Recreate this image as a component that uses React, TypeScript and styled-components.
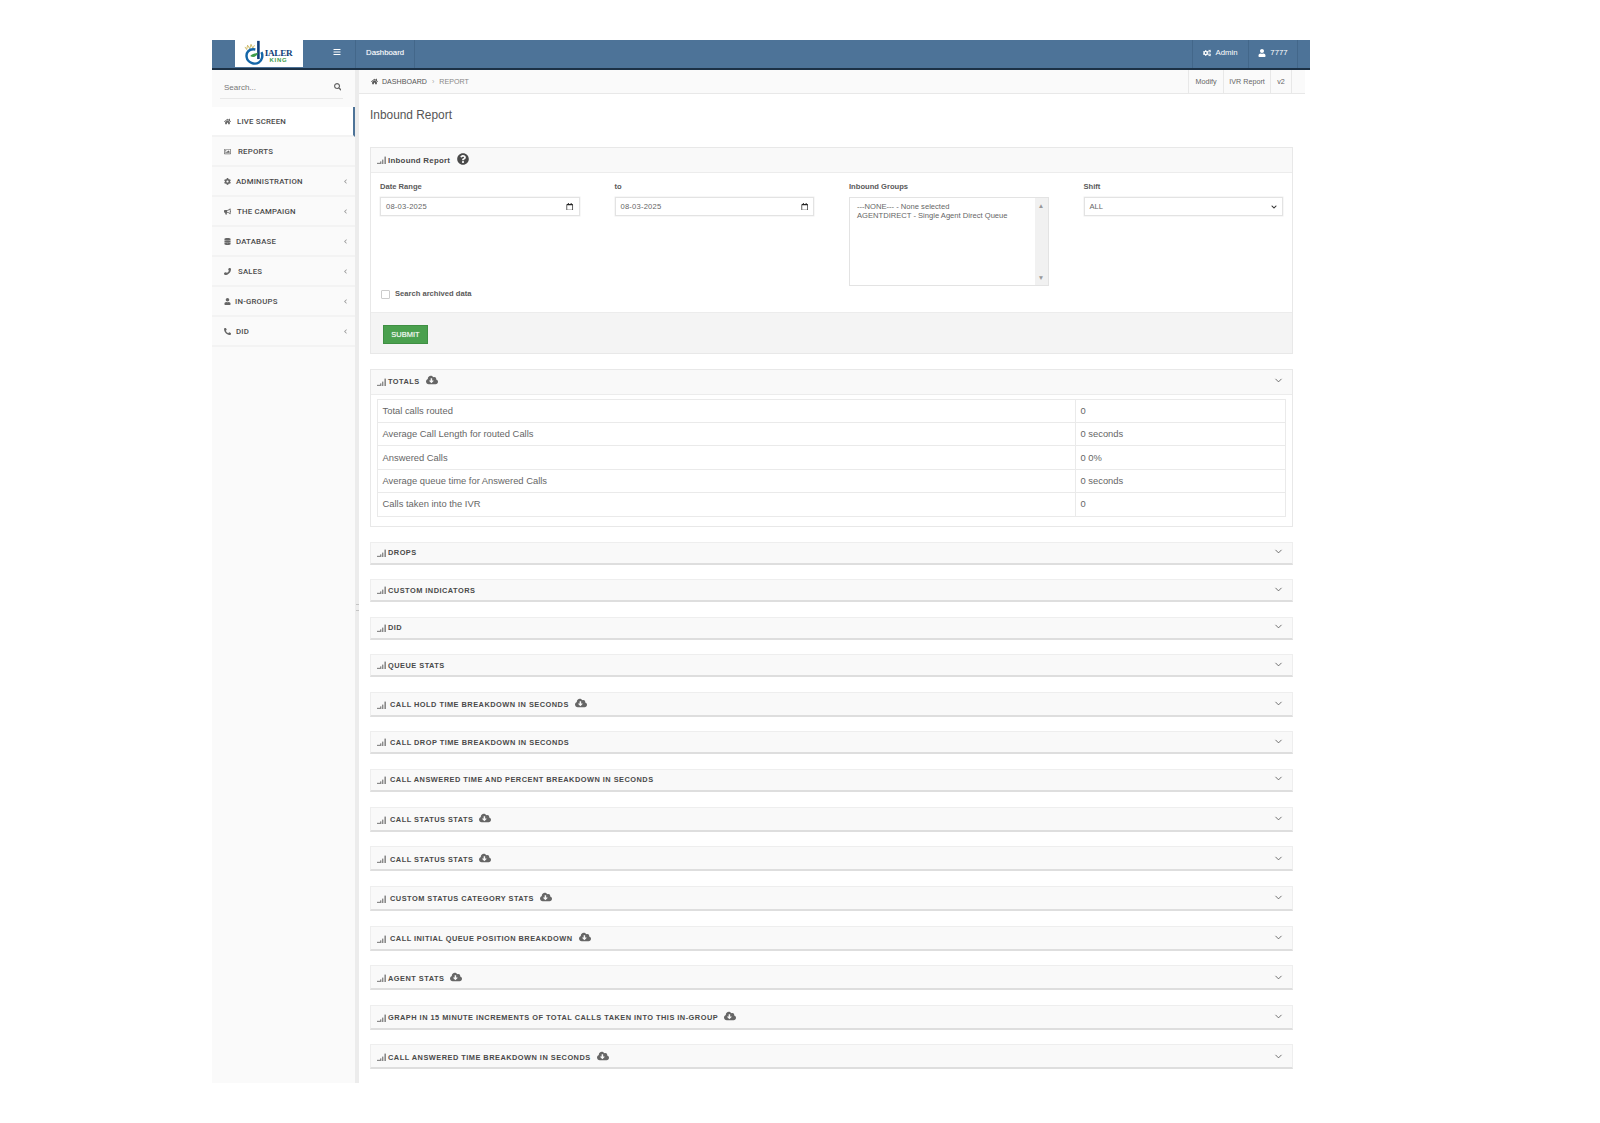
import styled, { createGlobalStyle } from "styled-components";
import type { ReactNode } from "react";
import { ChevronDown } from "lucide-react";
import {
  FaBars,
  FaBullhorn,
  FaChevronDown,
  FaChevronLeft,
  FaCloudDownloadAlt,
  FaCog,
  FaCogs,
  FaDatabase,
  FaHome,
  FaPhoneAlt,
  FaQuestionCircle,
  FaRegCalendar,
  FaRegImage,
  FaSearch,
  FaUser,
} from "react-icons/fa";
import { FaPhoneFlip } from "react-icons/fa6";

const GlobalStyle = createGlobalStyle`
  html, body {
    margin: 0;
    padding: 0;
    background: #fff;
  }
  * {
    box-sizing: border-box;
  }
`;

const navItems: { label: string; icon: ReactNode; gap: number; arrow?: boolean; active?: boolean }[] = [
  { label: "LIVE SCREEN", icon: <FaHome />, gap: 6, active: true },
  { label: "REPORTS", icon: <FaRegImage />, gap: 7 },
  { label: "ADMINISTRATION", icon: <FaCog />, gap: 5, arrow: true },
  { label: "THE CAMPAIGN", icon: <FaBullhorn />, gap: 6, arrow: true },
  { label: "DATABASE", icon: <FaDatabase />, gap: 5, arrow: true },
  { label: "SALES", icon: <FaPhoneFlip />, gap: 7, arrow: true },
  { label: "IN-GROUPS", icon: <FaUser />, gap: 4, arrow: true },
  { label: "DID", icon: <FaPhoneAlt />, gap: 5, arrow: true },
];

const totals = [
  ["Total calls routed", "0"],
  ["Average Call Length for routed Calls", "0 seconds"],
  ["Answered Calls", "0 0%"],
  ["Average queue time for Answered Calls", "0 seconds"],
  ["Calls taken into the IVR", "0"],
];

const sections: { title: string; cloud?: boolean; indent?: boolean; height: number }[] = [
  { title: "DROPS", height: 23 },
  { title: "CUSTOM INDICATORS", height: 23 },
  { title: "DID", height: 23 },
  { title: "QUEUE STATS", height: 23 },
  { title: "CALL HOLD TIME BREAKDOWN IN SECONDS", cloud: true, indent: true, height: 24.5 },
  { title: "CALL DROP TIME BREAKDOWN IN SECONDS", indent: true, height: 23 },
  { title: "CALL ANSWERED TIME AND PERCENT BREAKDOWN IN SECONDS", indent: true, height: 23.5 },
  { title: "CALL STATUS STATS", cloud: true, indent: true, height: 25 },
  { title: "CALL STATUS STATS", cloud: true, indent: true, height: 25 },
  { title: "CUSTOM STATUS CATEGORY STATS", cloud: true, indent: true, height: 25 },
  { title: "CALL INITIAL QUEUE POSITION BREAKDOWN", cloud: true, indent: true, height: 25 },
  { title: "AGENT STATS", cloud: true, height: 25 },
  { title: "GRAPH IN 15 MINUTE INCREMENTS OF TOTAL CALLS TAKEN INTO THIS IN-GROUP", cloud: true, height: 25 },
  { title: "CALL ANSWERED TIME BREAKDOWN IN SECONDS", cloud: true, height: 25 },
];

const SignalIcon = () => (
  <SignalSvg viewBox="0 0 9 8" aria-hidden="true">
    <rect x="0" y="6.8" width="3" height="1.2" />
    <rect x="3" y="5.4" width="1.4" height="2.6" />
    <rect x="5" y="3.6" width="1.4" height="4.4" />
    <rect x="7.4" y="0.6" width="1.6" height="7.4" />
  </SignalSvg>
);

const App = () => {
  return (
    <Frame>
      <GlobalStyle />
      <TopBar>
        <LogoBox>
          <LogoMark viewBox="0 0 24 30" aria-hidden="true">
            <path d="M1 8 L3 11 L4 6 L6.5 10 L8 5 L10 9.5 L12 6" fill="none" stroke="#c9b35a" strokeWidth="1" />
            <path d="M16.5 1 L16.5 22" stroke="#123f7a" strokeWidth="3" fill="none" />
            <path d="M13 11 C5 9.5 2 15 3 20 C4 26 12 29 17 26 C21 23.5 22 18 20 14" stroke="#1466a8" strokeWidth="2.8" fill="none" />
            <path d="M7 18.5 C10 15 13 16 16 14.5 C15 19 11 21 7 18.5 Z" fill="#3f9e4a" />
          </LogoMark>
          <LogoWords>
            <LogoName>IALER</LogoName>
            <LogoKing>KING</LogoKing>
          </LogoWords>
        </LogoBox>
        <MenuToggle>
          <FaBars />
        </MenuToggle>
        <TopLink>Dashboard</TopLink>
        <TopSpacer />
        <TopUser $width={56}>
          <FaCogs />
          Admin
        </TopUser>
        <TopUser $width={49}>
          <FaUser />
          7777
        </TopUser>
        <TopEnd />
      </TopBar>
      <Body>
        <Sidebar>
          <SearchRow>
            <span>Search...</span>
            <FaSearch />
          </SearchRow>
          {navItems.map((item) => (
            <NavItem key={item.label} $active={item.active}>
              <NavIcon $gap={item.gap}>{item.icon}</NavIcon>
              <NavLabel>{item.label}</NavLabel>
              {item.arrow && (
                <NavArrow>
                  <FaChevronLeft />
                </NavArrow>
              )}
            </NavItem>
          ))}
        </Sidebar>
        <Splitter>
          <SplitHandle />
        </Splitter>
        <Main>
          <Breadcrumb>
            <Crumbs>
              <FaHome />
              <CrumbLink>DASHBOARD</CrumbLink>
              <CrumbSep>›</CrumbSep>
              <CrumbCurrent>REPORT</CrumbCurrent>
            </Crumbs>
            <CrumbActions>
              <CrumbAction $width={35}>Modify</CrumbAction>
              <CrumbAction $width={47}>IVR Report</CrumbAction>
              <CrumbAction $width={21}>v2</CrumbAction>
            </CrumbActions>
          </Breadcrumb>
          <Content>
            <PageTitle>Inbound Report</PageTitle>
            <Panels>
              <Panel>
                <PanelHeader $height={25}>
                  <SignalIcon />
                  <FormTitle>Inbound Report</FormTitle>
                  <HelpIcon>
                    <FaQuestionCircle />
                  </HelpIcon>
                </PanelHeader>
                <FormBody>
                  <FormGrid>
                    <Field>
                      <FieldLabel>Date Range</FieldLabel>
                      <InputBox>
                        08-03-2025
                        <FaRegCalendar />
                      </InputBox>
                    </Field>
                    <Field>
                      <FieldLabel>to</FieldLabel>
                      <InputBox>
                        08-03-2025
                        <FaRegCalendar />
                      </InputBox>
                    </Field>
                    <Field>
                      <FieldLabel>Inbound Groups</FieldLabel>
                      <ListBox>
                        <ListOptions>
                          <div>---NONE--- - None selected</div>
                          <div>AGENTDIRECT - Single Agent Direct Queue</div>
                        </ListOptions>
                        <ListScroll>
                          <span>▲</span>
                          <span>▼</span>
                        </ListScroll>
                      </ListBox>
                    </Field>
                    <Field>
                      <FieldLabel>Shift</FieldLabel>
                      <SelectBox>
                        ALL
                        <FaChevronDown />
                      </SelectBox>
                    </Field>
                  </FormGrid>
                  <CheckRow>
                    <CheckBox />
                    <FieldLabel>Search archived data</FieldLabel>
                  </CheckRow>
                </FormBody>
                <FormFooter>
                  <SubmitButton type="button">SUBMIT</SubmitButton>
                </FormFooter>
              </Panel>

              <Panel>
                <PanelHeader $height={25}>
                  <SignalIcon />
                  <SectionTitle>TOTALS</SectionTitle>
                  <CloudIcon>
                    <FaCloudDownloadAlt />
                  </CloudIcon>
                  <PanelChevron>
                    <ChevronDown size={11} strokeWidth={1.8} />
                  </PanelChevron>
                </PanelHeader>
                <TotalsBody>
                  <TotalsTable>
                    <tbody>
                      {totals.map(([name, value]) => (
                        <tr key={name}>
                          <td>{name}</td>
                          <td>{value}</td>
                        </tr>
                      ))}
                    </tbody>
                  </TotalsTable>
                </TotalsBody>
              </Panel>

              {sections.map((section, index) => (
                <CollapsedPanel key={index}>
                  <PanelHeader $height={section.height} $flush $lowered={section.cloud}>
                    <SignalIcon />
                    <SectionTitle $indent={section.indent}>{section.title}</SectionTitle>
                    {section.cloud && (
                      <CloudIcon>
                        <FaCloudDownloadAlt />
                      </CloudIcon>
                    )}
                    <PanelChevron>
                      <ChevronDown size={11} strokeWidth={1.8} />
                    </PanelChevron>
                  </PanelHeader>
                </CollapsedPanel>
              ))}
            </Panels>
          </Content>
        </Main>
      </Body>
    </Frame>
  );
};

const Frame = styled.div`
  width: 1098px;
  margin: 40px 0 39px 212px;
  font-family: "Liberation Sans", Arial, sans-serif;
  color: #555;
`;

const TopBar = styled.header`
  display: flex;
  height: 30px;
  background: #4d7398;
  border-bottom: 2px solid #1c3146;
  color: #fff;
  font-size: 7.8px;
`;

const LogoBox = styled.div`
  display: flex;
  align-items: flex-end;
  justify-content: center;
  width: 68px;
  height: 27px;
  margin-left: 23px;
  padding-right: 2px;
  background: #fff;
`;

const LogoMark = styled.svg`
  width: 21px;
  height: 26px;
  margin-bottom: 1px;
  flex-shrink: 0;
`;

const LogoWords = styled.div`
  display: flex;
  flex-direction: column;
  align-items: center;
  margin-bottom: 3px;
  line-height: 7px;
`;

const LogoName = styled.span`
  font-family: "Liberation Serif", serif;
  font-size: 9.2px;
  font-weight: bold;
  letter-spacing: -0.3px;
  color: #123f7a;
`;

const LogoKing = styled.span`
  font-size: 6px;
  font-weight: bold;
  letter-spacing: 0.7px;
  color: #3f9e4a;
`;

const MenuToggle = styled.div`
  display: flex;
  align-items: center;
  justify-content: center;
  width: 52px;
  padding-bottom: 5px;
  padding-left: 16px;
  font-size: 8px;
`;

const TopLink = styled.div`
  display: flex;
  align-items: center;
  width: 60px;
  padding-left: 10px;
  padding-bottom: 3px;
  border-left: 1px solid #43678a;
  border-right: 1px solid #43678a;
  text-shadow: 0 0 1px rgba(255, 255, 255, 0.4);
`;

const TopSpacer = styled.div`
  flex: 1;
`;

const TopUser = styled.div<{ $width: number }>`
  display: flex;
  align-items: center;
  justify-content: center;
  gap: 4px;
  width: ${(p) => p.$width}px;
  padding-bottom: 3px;
  border-left: 1px solid #43678a;
  svg {
    font-size: 8px;
  }
`;

const TopEnd = styled.div`
  width: 13px;
  border-left: 1px solid #43678a;
`;

const Body = styled.div`
  display: flex;
  height: 1013px;
`;

const Sidebar = styled.aside`
  width: 143px;
  flex-shrink: 0;
  background: #fafafa;
`;

const SearchRow = styled.div`
  display: flex;
  align-items: center;
  justify-content: space-between;
  height: 29px;
  margin: 0 12px 8px 8px;
  padding: 6px 2px 0 4px;
  border-bottom: 1px solid #e8e8e8;
  font-size: 8px;
  color: #777;
  svg {
    font-size: 7.5px;
    color: #666;
  }
`;

const NavItem = styled.div<{ $active?: boolean }>`
  display: flex;
  align-items: center;
  height: 30px;
  padding-left: 12px;
  border-bottom: 2px solid #f3f3f3;
  border-right: ${(p) => (p.$active ? "2px solid #4d7398" : "0")};
  background: ${(p) => (p.$active ? "#fff" : "transparent")};
`;

const NavIcon = styled.span<{ $gap: number }>`
  display: flex;
  align-items: center;
  margin-right: ${(p) => p.$gap}px;
  font-size: 7px;
  color: #666;
`;

const NavLabel = styled.span`
  font-family: Roboto, "Liberation Sans", sans-serif;
  font-size: 7.8px;
  font-weight: 500;
  letter-spacing: 0.2px;
  color: #4a4a4a;
`;

const NavArrow = styled.span`
  display: flex;
  margin-left: auto;
  margin-right: 7px;
  font-size: 5px;
  color: #999;
`;

const Splitter = styled.div`
  display: flex;
  justify-content: center;
  width: 4px;
  flex-shrink: 0;
  padding-top: 534px;
  background: #ececec;
`;

const SplitHandle = styled.div`
  width: 2px;
  height: 7px;
  border-top: 1px dotted #c4c4c4;
  border-bottom: 1px dotted #c4c4c4;
`;

const Main = styled.main`
  width: 946px;
  flex-shrink: 0;
`;

const Breadcrumb = styled.div`
  display: flex;
  justify-content: space-between;
  height: 24px;
  background: #fafafa;
  border-bottom: 1px solid #e8e8e8;
`;

const Crumbs = styled.div`
  display: flex;
  align-items: center;
  padding-left: 12px;
  font-size: 7.1px;
  svg {
    font-size: 7px;
    margin-right: 4px;
  }
`;

const CrumbLink = styled.span`
  color: #555;
`;

const CrumbSep = styled.span`
  margin: 0 5px;
  color: #aaa;
`;

const CrumbCurrent = styled.span`
  color: #888;
`;

const CrumbActions = styled.div`
  display: flex;
  margin-right: 13px;
  border-right: 1px solid #e8e8e8;
`;

const CrumbAction = styled.div<{ $width: number }>`
  display: flex;
  align-items: center;
  justify-content: center;
  width: ${(p) => p.$width}px;
  border-left: 1px solid #e8e8e8;
  font-size: 7.2px;
  color: #666;
`;

const Content = styled.div`
  padding: 0 12px 0 11px;
`;

const PageTitle = styled.h1`
  height: 53px;
  margin: 0;
  padding-top: 14px;
  font-size: 11.9px;
  line-height: 14px;
  font-weight: normal;
  color: #555;
`;

const Panels = styled.div`
  display: flex;
  flex-direction: column;
  gap: 14.6px;
`;

const Panel = styled.section`
  border: 1px solid #e8e8e8;
  background: #fff;
`;

const CollapsedPanel = styled.section`
  border: 1px solid #eee;
  border-bottom: 2px solid #dedede;
  background: #f9f9f9;
`;

const PanelHeader = styled.div<{ $height: number; $flush?: boolean; $lowered?: boolean }>`
  display: flex;
  align-items: center;
  height: ${(p) => (p.$flush ? p.$height - 3 : p.$height)}px;
  padding: ${(p) => (p.$lowered ? "2px" : "0")} 8px 0 6px;
  background: #f9f9f9;
  border-bottom: ${(p) => (p.$flush ? "0" : "1px solid #ececec")};
`;

const SignalSvg = styled.svg`
  width: 9px;
  height: 8px;
  margin-right: 2px;
  fill: #8a8a8a;
  flex-shrink: 0;
`;

const FormTitle = styled.h2`
  margin: 0;
  font-size: 7.9px;
  font-weight: bold;
  letter-spacing: 0.25px;
  color: #4a4a4a;
`;

const SectionTitle = styled.h2<{ $indent?: boolean }>`
  margin: 0 0 0 ${(p) => (p.$indent ? "2px" : "0")};
  font-size: 7.4px;
  font-weight: bold;
  letter-spacing: 0.48px;
  color: #4a4a4a;
`;

const HelpIcon = styled.span`
  display: flex;
  margin-left: 7px;
  margin-top: -2px;
  font-size: 12px;
  color: #4a4a4a;
`;

const CloudIcon = styled.span`
  display: flex;
  margin-left: 6px;
  margin-top: -3px;
  font-size: 12px;
  color: #666;
`;

const PanelChevron = styled.span`
  display: flex;
  margin-left: auto;
  margin-top: -2px;
  color: #555;
`;

const FormBody = styled.div`
  height: 139px;
  padding: 9px 9px 0 9px;
  display: flex;
  flex-direction: column;
`;

const FormGrid = styled.div`
  display: grid;
  grid-template-columns: repeat(4, 199.5px);
  column-gap: 35px;
  height: 105px;
`;

const Field = styled.div`
  display: flex;
  flex-direction: column;
  align-items: flex-start;
`;

const FieldLabel = styled.label`
  height: 15px;
  font-size: 7.6px;
  line-height: 10px;
  font-weight: bold;
  color: #5a5a5a;
`;

const InputBox = styled.div`
  display: flex;
  align-items: center;
  justify-content: space-between;
  width: 100%;
  height: 19px;
  padding: 0 5px;
  border: 1px solid #e3e3e3;
  box-shadow: 0 0 0 0.5px #eee;
  font-size: 7.6px;
  letter-spacing: 0.2px;
  color: #666;
  svg {
    font-size: 7.5px;
    color: #222;
  }
`;

const SelectBox = styled(InputBox)`
  letter-spacing: 0;
  svg {
    font-size: 6px;
    color: #333;
  }
`;

const ListBox = styled.div`
  display: flex;
  width: 100%;
  height: 89px;
  border: 1px solid #e3e3e3;
  font-size: 7.6px;
  line-height: 9.4px;
  color: #666;
`;

const ListOptions = styled.div`
  flex: 1;
  padding: 4px 7px;
`;

const ListScroll = styled.div`
  display: flex;
  flex-direction: column;
  justify-content: space-between;
  align-items: center;
  width: 13px;
  padding: 3px 0;
  background: #f1f1f1;
  font-size: 6.5px;
  color: #999;
`;

const CheckRow = styled.div`
  display: flex;
  align-items: center;
  gap: 5px;
  margin-top: 2px;
  margin-left: 1px;
  label {
    height: auto;
  }
`;

const CheckBox = styled.span`
  width: 9px;
  height: 9px;
  border: 1px solid #ccc;
  border-radius: 1px;
  background: #fff;
`;

const FormFooter = styled.div`
  display: flex;
  align-items: center;
  height: 41px;
  padding-left: 12px;
  padding-top: 2px;
  background: #f4f4f4;
  border-top: 1px solid #ececec;
`;

const SubmitButton = styled.button`
  width: 45px;
  height: 19px;
  padding: 0;
  border: 1px solid #3f8f43;
  background: #4aa04e;
  color: #fff;
  font-family: inherit;
  font-size: 7.5px;
  font-weight: normal;
  text-shadow: 0 0 1px rgba(255, 255, 255, 0.5);
`;

const TotalsBody = styled.div`
  padding: 4px 6px 9.5px 6px;
`;

const TotalsTable = styled.table`
  width: 100%;
  border-collapse: collapse;
  table-layout: fixed;
  font-size: 9.4px;
  color: #666;
  td {
    height: 23.4px;
    padding: 0 5px 1px 4.5px;
    border: 1px solid #eaeaea;
  }
  td:first-child {
    width: 698px;
  }
`;

export default App;
